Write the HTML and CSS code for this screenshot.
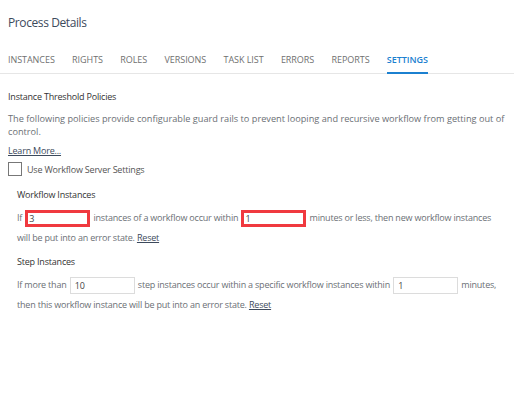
FILE: index.html
```html
<!DOCTYPE html>
<html lang="en">
<head>
    <meta charset="UTF-8">
    <meta name="viewport" content="width=device-width, initial-scale=1.0">
    <title>Process Details</title>
    <link rel="stylesheet" href="styles.css">
</head>
<body>

    <header class="page-header">
        <h1>Process Details</h1>
    </header>

    <nav class="tabs">
        <a href="#">Instances</a>
        <a href="#">Rights</a>
        <a href="#">Roles</a>
        <a href="#">Versions</a>
        <a href="#">Task List</a>
        <a href="#">Errors</a>
        <a href="#">Reports</a>
        <a href="#" class="active">Settings</a>
    </nav>

    <div id="settings">
        <h2>Instance Threshold Policies</h2>
        <p class="intro">The following policies provide configurable guard rails to prevent looping and recursive workflow from getting out of control.</p>
        <a href="#" class="learn-more">Learn More...</a>

        <label class="check-row">
            <span class="check-box"></span>
            Use Workflow Server Settings
        </label>

        <div class="policy">
            <h3>Workflow Instances</h3>
            <p class="policy-text">If <input class="num-input invalid" type="text" value="3"> instances of a workflow occur within <input class="num-input invalid" type="text" value="1"> minutes or less, then new workflow instances will be put into an error state. <a href="#" class="reset">Reset</a></p>
        </div>

        <div class="policy">
            <h3>Step Instances</h3>
            <p class="policy-text">If more than <input class="num-input" type="text" value="10"> step instances occur within a specific workflow instances within <input class="num-input" type="text" value="1"> minutes, then this workflow instance will be put into an error state. <a href="#" class="reset">Reset</a></p>
        </div>
    </div>

</body>
</html>
```

FILE: styles.css
```css
body {
    font-family: "Open Sans", "Liberation Sans", sans-serif;
    margin: 0;
    padding: 0;
    background-color: #fff;
    color: #6b6f75;
    font-size: 9px;
    letter-spacing: -0.2px;
}

.page-header {
    padding: 14px 8px 0 8px;
}

.page-header h1 {
    margin: 0;
    font-size: 12px;
    letter-spacing: -0.4px;
    font-weight: 400;
    color: #3d4a5c;
    line-height: 18px;
}

.tabs {
    display: flex;
    gap: 17.3px;
    margin-top: 21px;
    padding: 0 8px;
    border-bottom: 1px solid #e6e6e6;
}

.tabs a {
    color: #707070;
    text-decoration: none;
    text-transform: uppercase;
    font-size: 9px;
    letter-spacing: -0.05px;
    line-height: 14px;
    padding-bottom: 5px;
    border-bottom: 2px solid transparent;
    margin-bottom: -1px;
}

.tabs a.active {
    color: #1b80d0;
    font-weight: 600;
    border-bottom-color: #1b80d0;
}

#settings {
    padding: 16px 8px 0 8px;
}

#settings h2 {
    margin: 0;
    font-size: 9px;
    font-weight: 400;
    color: #333;
    line-height: 14px;
}

.intro {
    margin: 8px 0 0 0;
    line-height: 13px;
    font-size: 9.2px;
    letter-spacing: 0;
}

.learn-more {
    display: inline-block;
    margin-top: 6px;
    color: #3d4a5c;
    line-height: 13px;
}

.check-row {
    display: flex;
    align-items: center;
    gap: 5px;
    margin-top: 5px;
    color: #555;
}

.check-box {
    width: 12px;
    height: 12px;
    border: 1px solid #777;
    background: #fff;
}

.policy {
    padding-left: 9px;
    margin-top: 12px;
}

.policy + .policy {
    margin-top: 7px;
}

.policy h3 {
    margin: 0;
    font-size: 9px;
    font-weight: 400;
    color: #333;
    line-height: 14px;
}

.policy-text {
    margin: 6px 0 0 0;
    line-height: 20px;
}

.num-input {
    font-family: inherit;
    font-size: 9px;
    color: #444;
    width: 65px;
    height: 17px;
    box-sizing: border-box;
    padding: 0 4px;
    border: 1px solid #dcdcdc;
    margin: 0 1px;
    vertical-align: middle;
}

.num-input.invalid {
    border: 3px solid #f0393f;
    padding: 0 1px;
}

.reset {
    color: #3d4a5c;
}
```
